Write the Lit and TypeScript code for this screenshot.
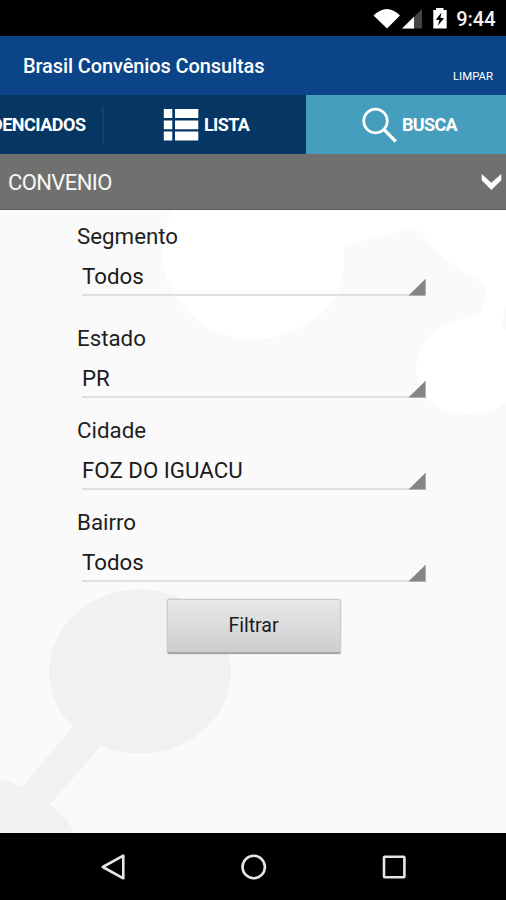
import { LitElement, html, css, svg } from "lit";
import { customElement, property } from "lit/decorators.js";

@customElement("spinner-field")
class SpinnerField extends LitElement {
  @property() label = "";
  @property() value = "";

  static styles = css`
    :host { display: block; }
    .label {
      font-size: 22.3px;
      line-height: 30px;
      height: 30px;
      color: #1f1f1f;
    }
    .select {
      box-sizing: border-box;
      margin-left: 5px;
      width: 344px;
      height: 45px;
      border-bottom: 2px solid #dfdfdf;
      display: flex;
      justify-content: space-between;
      align-items: flex-end;
    }
    .value {
      align-self: flex-start;
      padding-top: 10px;
      font-size: 22.3px;
      line-height: 30px;
      color: #1a1a1a;
      white-space: pre;
    }
    .corner { display: block; margin-bottom: -2px; }
  `;

  render() {
    return html`
      <div class="label">${this.label}</div>
      <div class="select">
        <span class="value">${this.value}</span>
        <svg class="corner" width="18" height="18" viewBox="0 0 18 18">
          <path d="M0.5 17.6 17.6 0.8V17.6z" fill="#858585" />
        </svg>
      </div>
    `;
  }
}

@customElement("app-root")
class AppRoot extends LitElement {
  static styles = css`
    :host {
      display: flex;
      flex-direction: column;
      width: 506px;
      height: 900px;
      overflow: hidden;
      background: #000;
      font-family: Roboto, "Liberation Sans", sans-serif;
      color: #fff;
    }
    svg { display: block; flex: none; }
    .status {
      flex: none;
      height: 36px;
      display: flex;
      align-items: center;
      justify-content: flex-end;
      padding-right: 10.5px;
      box-sizing: border-box;
    }
    .clock {
      margin-left: 7px;
      padding-top: 2px;
      font-size: 20px;
      line-height: 24px;
      font-weight: 500;
      color: #f4f4f4;
    }
    .bar {
      flex: none;
      height: 59px;
      box-sizing: border-box;
      padding: 0 13px 0 23px;
      background: #0b4588;
      display: flex;
      justify-content: space-between;
    }
    .title {
      font-size: 20px;
      line-height: 24px;
      padding-top: 18px;
      font-weight: 500;
      letter-spacing: -0.11px;
      white-space: nowrap;
    }
    .clear {
      font-size: 11.4px;
      line-height: 14px;
      padding-top: 33px;
    }
    .tabs {
      flex: none;
      height: 59px;
      display: grid;
      grid-template-columns: 102px 204px 200px;
      background: #063764;
      font-size: 18px;
      font-weight: 700;
      line-height: 60px;
      letter-spacing: -0.65px;
    }
    .tab { display: flex; align-items: center; white-space: nowrap; overflow: hidden; }
    .first { justify-content: flex-end; padding-right: 16.5px; letter-spacing: -0.5px; }
    .second {
      padding-left: 61px;
      gap: 5px;
      background: linear-gradient(#1e3f64, #1e3f64) 0 50% / 2px 38px no-repeat;
    }
    .active { background: #459ebd; padding-left: 56px; gap: 4px; }
    .section {
      flex: none;
      height: 56px;
      box-sizing: border-box;
      border-bottom: 1px solid #5c5c5a;
      background: #70706e;
      display: flex;
      align-items: center;
      justify-content: space-between;
      padding: 2px 4px 0 8px;
      font-size: 22px;
      line-height: 30px;
      letter-spacing: -0.6px;
      color: #f7f7f7;
    }
    .content {
      flex: none;
      height: 623px;
      background: #fafafa;
      display: grid;
      overflow: hidden;
    }
    .backdrop, .form { grid-area: 1 / 1; }
    .form {
      display: flex;
      flex-direction: column;
      padding: 11px 0 0 77px;
      gap: 17px;
    }
    .wide { margin-bottom: 10px; }
    .filter {
      margin: 0 0 0 89.5px;
      width: 174px;
      height: 55px;
      box-sizing: border-box;
      border: 1px solid #cbcbcb;
      border-bottom: 2px solid #a6a6a6;
      border-radius: 2px;
      padding: 0;
      background: linear-gradient(#e8e8e8, #cecece);
      box-shadow: 0 0 1.5px rgba(0, 0, 0, 0.25);
      font: 19.6px / 24px Roboto, sans-serif;
      letter-spacing: -0.05px;
      color: #1c1c1c;
    }
    .nav {
      flex: none;
      height: 67px;
      display: flex;
      align-items: center;
      padding-left: 100px;
      gap: 112px;
    }
  `;

  private backdrop() {
    return svg`
      <svg class="backdrop" width="506" height="623" viewBox="0 210 506 623">
        <path fill="#ffffff" d="M173 210C158 240 158 268 172 289C189 322 219 339 254 339C300 339 344 306 344 265V246L397 232C407 227 415 229 422 233C440 262 470 273 487 286C487 296 484 305 480 314C444 321 417 336 416 369C417 399 443 415 469 414C488 414 499 409 506 401V210Z" />
        <path fill="#f9f9f9" d="M506 304V330L501 328Z" />
        <g fill="#f1f1f1">
          <ellipse cx="140" cy="671.5" rx="91" ry="82" />
          <path d="M73 727 22 787C14 784 8 781 0 780V833H74C70 821 60 813 50 804L101 746Z" />
        </g>
      </svg>
    `;
  }

  render() {
    return html`
      <div class="status">
        <svg width="76" height="26" viewBox="373 5 76 26">
          <path fill="#fff" d="M373.5 15.5Q387 2.5 400 15.5L387 28.5Z" />
          <path fill="#444" d="M422 9V28.5H402Z" />
          <path fill="#fff" d="M414 16.8V28.5H402Z" />
          <path fill="#fff" d="M433.3 10H436V8H443.5V10H446.7V28.5H433.3Z" />
          <path fill="#000" d="M441.5 12.5 435.8 19.8 439.4 20.1 437.8 25.7 444 18.2 440.4 17.7Z" />
        </svg>
        <span class="clock">9:44</span>
      </div>
      <header class="bar">
        <span class="title">Brasil Convênios Consultas</span>
        <span class="clear">LIMPAR</span>
      </header>
      <nav class="tabs">
        <div class="tab first">DENCIADOS</div>
        <div class="tab second">
          <svg width="36" height="33" viewBox="0 0 36 33" fill="#fff">
            <path d="M0.8 1H9.3V10H0.8ZM12 1H35.3V10H12ZM0.8 12.4H9.3V21.2H0.8ZM12 12.4H35.3V21.2H12ZM0.8 23.6H9.3V32.4H0.8ZM12 23.6H35.3V32.4H12Z" />
          </svg>
          <span>LISTA</span>
        </div>
        <div class="tab active">
          <svg width="36" height="36" viewBox="0 0 36 36" fill="none" stroke="#fff">
            <circle cx="13.5" cy="14" r="11.8" stroke-width="2.7" />
            <path d="M21.8 22.4 33.8 34.5" stroke-width="3.2" />
          </svg>
          <span>BUSCA</span>
        </div>
      </nav>
      <div class="section">
        <span>CONVENIO</span>
        <svg width="21" height="20" viewBox="0 0 21 20">
          <path fill="#fff" d="M0.7 1 10.3 9.8 20.3 1V7.3L10.3 17 0.7 7.3Z" />
        </svg>
      </div>
      <main class="content">
        ${this.backdrop()}
        <div class="form">
          <spinner-field class="wide" label="Segmento" value="Todos"></spinner-field>
          <spinner-field label="Estado" value="PR"></spinner-field>
          <spinner-field label="Cidade" value="FOZ DO IGUACU"></spinner-field>
          <spinner-field label="Bairro" value="Todos"></spinner-field>
          <button class="filter">Filtrar</button>
        </div>
      </main>
      <div class="nav">
        <svg width="27" height="28" viewBox="0 0 27 28" fill="none" stroke="#e6e6e6" stroke-width="2.6" stroke-linejoin="round">
          <path d="M23.3 2.7V25.3L2.8 14Z" />
        </svg>
        <svg width="29" height="28" viewBox="0 0 29 28" fill="none" stroke="#e6e6e6" stroke-width="2.6">
          <circle cx="14.7" cy="14" r="11.2" />
        </svg>
        <svg width="28" height="28" viewBox="0 0 28 28" fill="none" stroke="#e6e6e6" stroke-width="2.6">
          <rect x="4" y="3.8" width="20.4" height="20.4" rx="0.8" />
        </svg>
      </div>
    `;
  }
}
